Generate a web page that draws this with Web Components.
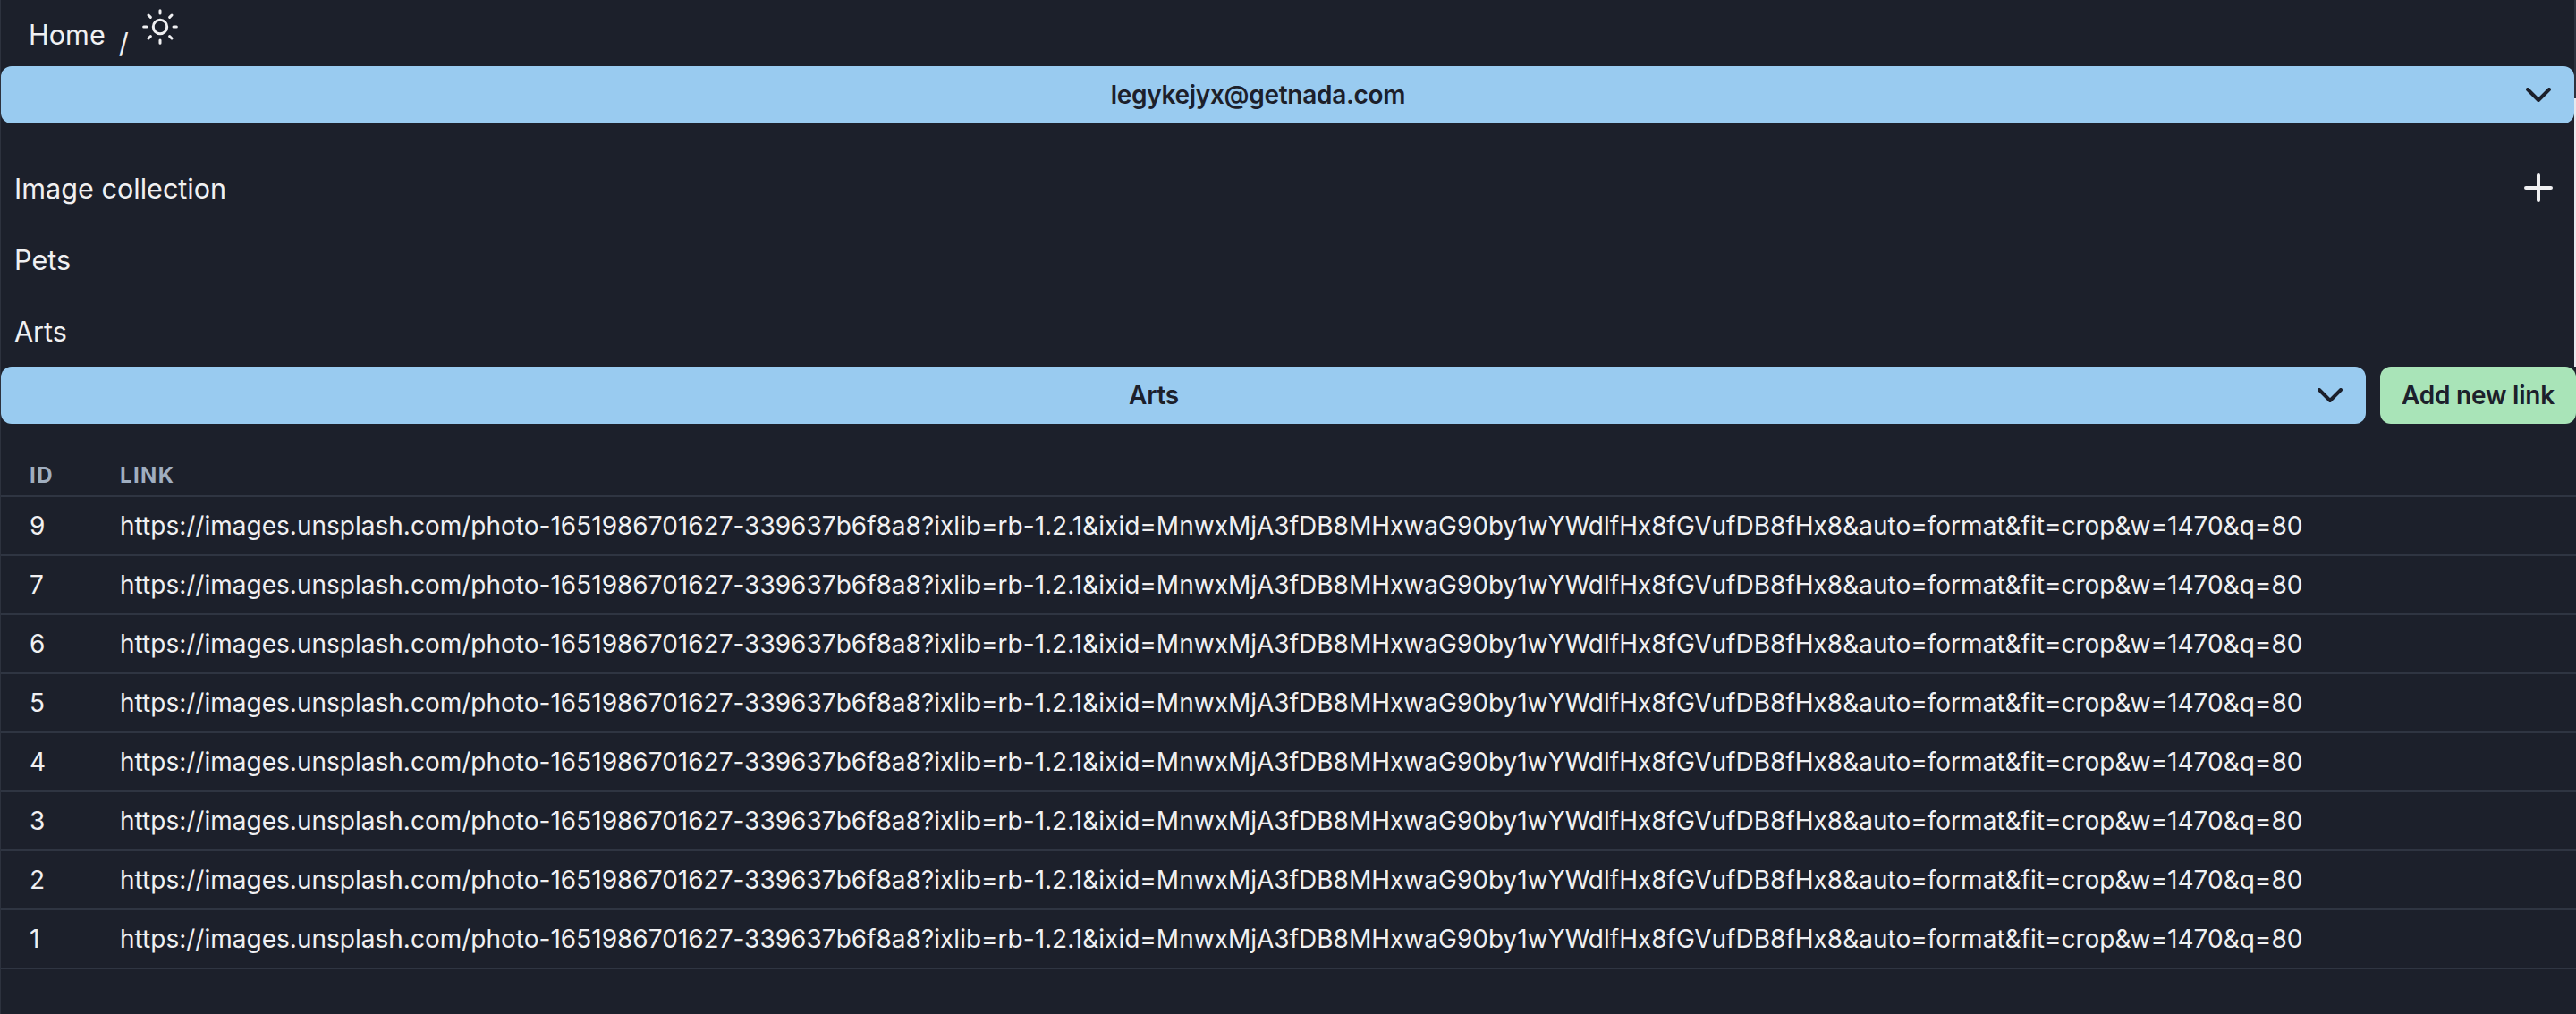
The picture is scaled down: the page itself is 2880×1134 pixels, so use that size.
<!DOCTYPE html>
<html>
<head>
<meta charset="utf-8">
<style>
  html, body { margin: 0; height: 100%; background: #1c202b; }
  body { font-family: Inter, "Liberation Sans", sans-serif; color: #f0f0f2; overflow: hidden; }
</style>
</head>
<body>
<app-shell>
  <app-breadcrumb></app-breadcrumb>
  <app-select>legykejyx@getnada.com</app-select>
  <collection-list>
    <collection-item add>Image collection</collection-item>
    <collection-item>Pets</collection-item>
    <collection-item>Arts</collection-item>
  </collection-list>
  <link-toolbar></link-toolbar>
  <link-table></link-table>
</app-shell>
<script>
class AppShell extends HTMLElement {
    connectedCallback() {
        this.attachShadow({ mode: 'open' });
        this.shadowRoot.innerHTML = `
            <style>
                :host { display: block; position: relative; height: 1134px; box-sizing: border-box; padding: 0 2px 0 1px; }
                .edge { position: absolute; top: 0; bottom: 0; left: 0; width: 1px; background: #2d323e; }
                .edge-top { position: absolute; top: 0; right: 0; width: 2px; height: 110px; background: #2d323e; }
                .edge-light { position: absolute; top: 110px; right: 0; width: 2px; height: 300px; background: #e6e8ee; }
            </style>
            <div class="edge"></div>
            <div class="edge-top"></div>
            <div class="edge-light"></div>
            <slot></slot>
        `;
    }
}

class AppBreadcrumb extends HTMLElement {
    connectedCallback() {
        this.attachShadow({ mode: 'open' });
        this.shadowRoot.innerHTML = `
            <style>
                :host { display: flex; align-items: flex-start; height: 74px; font-size: 30.6px; padding-left: 31px; }
                .home { margin-top: 20px; line-height: 38px; }
                .sep { margin: 29px 0 0 15px; line-height: 38px; }
                svg { width: 44px; height: 44px; margin: 8px 0 0 13px; }
            </style>
            <span class="home">Home</span>
            <span class="sep">/</span>
            <svg viewBox="0 0 24 24" fill="none" stroke="#f0f0f2" stroke-width="1.65" stroke-linecap="round">
                <circle cx="12" cy="12" r="4.2"/>
                <path d="M12 2v1.8M12 20.2V22M2 12h1.8M20.2 12H22M4.9 4.9l1.3 1.3M17.8 17.8l1.3 1.3M4.9 19.1l1.3-1.3M17.8 6.2l1.3-1.3"/>
            </svg>
        `;
    }
}

class AppSelect extends HTMLElement {
    connectedCallback() {
        this.attachShadow({ mode: 'open' });
        this.shadowRoot.innerHTML = `
            <style>
                :host { display: flex; flex: 1; align-items: center; justify-content: center; position: relative; box-sizing: border-box; height: 64px; padding-right: 66px; background: #99cbf0; color: #1c202b; border-radius: 12px; font-size: 28px; font-weight: 600; letter-spacing: -0.3px; }
                svg { position: absolute; right: 26px; top: 24px; width: 28px; height: 17px; }
            </style>
            <slot></slot>
            <svg viewBox="0 0 28 17" fill="none" stroke="#1c202b" stroke-width="4" stroke-linecap="round" stroke-linejoin="round">
                <path d="M2 2l12 12L26 2"/>
            </svg>
        `;
    }
}

class CollectionList extends HTMLElement {
    connectedCallback() {
        this.attachShadow({ mode: 'open' });
        this.shadowRoot.innerHTML = `
            <style>
                :host { display: block; padding-top: 32px; }
            </style>
            <slot></slot>
        `;
    }
}

class CollectionItem extends HTMLElement {
    connectedCallback() {
        this.attachShadow({ mode: 'open' });
        const plus = this.hasAttribute('add') ? `
            <svg viewBox="0 0 32 32" stroke="#f0f0f2" stroke-width="4" stroke-linecap="round">
                <path d="M16 2v28M2 16h28"/>
            </svg>` : '';
        this.shadowRoot.innerHTML = `
            <style>
                :host { display: flex; align-items: center; justify-content: space-between; height: 80px; padding: 0 24px 0 15px; font-size: 30.6px; }
                svg { width: 32px; height: 32px; }
            </style>
            <slot></slot>
            ${plus}
        `;
    }
}

class LinkToolbar extends HTMLElement {
    connectedCallback() {
        this.attachShadow({ mode: 'open' });
        this.shadowRoot.innerHTML = `
            <style>
                :host { display: flex; gap: 16px; margin-right: -2px; position: relative; }
                button { flex: none; height: 64px; width: 219px; padding: 0; border: 0; border-radius: 12px; background: #a9e4b8; color: #1c202b; font: 600 28px Inter, sans-serif; letter-spacing: -0.2px; }
            </style>
            <app-select>Arts</app-select>
            <button>Add new link</button>
        `;
    }
}

const URL_TEXT = 'https://images.unsplash.com/photo-1651986701627-339637b6f8a8?ixlib=rb-1.2.1&ixid=MnwxMjA3fDB8MHxwaG90by1wYWdlfHx8fGVufDB8fHx8&auto=format&fit=crop&w=1470&q=80';

class LinkTable extends HTMLElement {
    connectedCallback() {
        this.attachShadow({ mode: 'open' });
        const rows = [9, 7, 6, 5, 4, 3, 2, 1].map(id => `
            <tr><td>${id}</td><td>${URL_TEXT.replace(/&/g, '&amp;')}</td></tr>`).join('');
        this.shadowRoot.innerHTML = `
            <style>
                :host { display: block; margin: 32px -2px 0 0; }
                table { width: 100%; table-layout: fixed; border-collapse: separate; border-spacing: 0; }
                th, td { box-sizing: border-box; text-align: left; padding: 0 0 0 48px; border-bottom: 2px solid #2f3542; }
                th:first-child, td:first-child { padding-left: 32px; width: 85px; }
                th { height: 50px; padding-top: 2px; font-size: 24px; font-weight: 700; letter-spacing: 1.4px; color: #a0aec0; }
                td { height: 66px; font-size: 28px; letter-spacing: 0.01px; }
            </style>
            <table>
                <thead><tr><th>ID</th><th>LINK</th></tr></thead>
                <tbody>${rows}</tbody>
            </table>
        `;
    }
}

customElements.define('app-shell', AppShell);
customElements.define('app-breadcrumb', AppBreadcrumb);
customElements.define('app-select', AppSelect);
customElements.define('collection-list', CollectionList);
customElements.define('collection-item', CollectionItem);
customElements.define('link-toolbar', LinkToolbar);
customElements.define('link-table', LinkTable);
</script>
</body>
</html>
